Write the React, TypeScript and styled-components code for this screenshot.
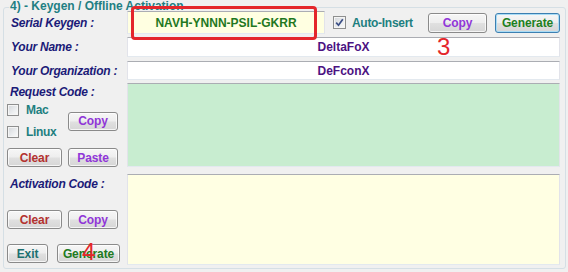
import React from "react";
import styled, { createGlobalStyle, css } from "styled-components";

const Global = createGlobalStyle`
  html, body { margin: 0; padding: 0; background: #f0f0f0; }
  body {
    width: 568px; height: 272px; overflow: hidden;
    font-family: "Liberation Sans", Arial, sans-serif;
  }
`;

const Window = styled.div`
  position: relative;
  width: 568px;
  height: 272px;
  box-sizing: border-box;
  padding: 7px 2px 3px 3px;
  background: #f0f0f0;
`;

const Frame = styled.div`
  height: 100%;
  box-sizing: border-box;
  border: 1px solid #d5dfe5;
  border-radius: 3px;
  padding: 0 5px 0 3px;
`;

const Title = styled.div`
  display: table;
  margin: -8px 0 -1px 2px;
  padding: 0 1px;
  height: 12px;
  line-height: 12px;
  background: #f0f0f0;
  color: #1f7f83;
  font-weight: bold;
  font-size: 12px;
  white-space: nowrap;
`;

const Row = styled.div<{ $h: number; $mt: number }>`
  display: grid;
  grid-template-columns: 120px 433px;
  height: ${(p) => p.$h}px;
  margin-top: ${(p) => p.$mt}px;
`;

const labelText = css`
  color: #1b1b78;
  font-weight: bold;
  font-style: italic;
  font-size: 12px;
  letter-spacing: -0.25px;
  white-space: nowrap;
`;

const Label = styled.div`
  ${labelText};
  align-self: center;
  padding-left: 4px;
  line-height: 14px;
`;

const PanelLabel = styled.div<{ $mt: number }>`
  ${labelText};
  margin-top: ${(p) => p.$mt}px;
  padding-left: 3px;
  line-height: 14px;
`;

const TextBox = styled.div<{ $bg: string; $color?: string; $w?: number }>`
  box-sizing: border-box;
  height: 100%;
  width: ${(p) => (p.$w ? `${p.$w}px` : "100%")};
  flex: none;
  border: 1px solid;
  border-color: #abadb3 #e2e3ea #e3e9ef #e2e3ea;
  background: ${(p) => p.$bg};
  color: ${(p) => p.$color || "#000"};
  display: flex;
  align-items: center;
  justify-content: center;
  font-weight: bold;
  font-size: 12px;
  white-space: nowrap;
`;

const TopControls = styled.div`
  display: flex;
  align-items: center;
  height: 100%;
`;

const Btn = styled.button<{ $color: string; $w: number; $h?: number; $focus?: boolean; $ml?: string }>`
  box-sizing: border-box;
  width: ${(p) => p.$w}px;
  height: ${(p) => p.$h || 19}px;
  margin: 0;
  margin-left: ${(p) => p.$ml || "0"};
  padding: 0;
  flex: none;
  border: 1px solid ${(p) => (p.$focus ? "#3c7fb1" : "#8a8a8a")};
  border-radius: 3px;
  background: linear-gradient(#f6f6f6 0%, #eeeeee 48%, #e0e0e0 52%, #d6d6d6 100%);
  box-shadow: inset 0 0 0 1px ${(p) => (p.$focus ? "#a9dcf6" : "rgba(255,255,255,0.75)")};
  color: ${(p) => p.$color};
  font-family: "Liberation Sans", Arial, sans-serif;
  font-weight: bold;
  font-size: 12px;
  letter-spacing: -0.1px;
  line-height: 1;
  cursor: default;
`;

const CheckWrap = styled.label<{ $ml?: number }>`
  display: flex;
  align-items: center;
  margin-left: ${(p) => p.$ml || 0}px;
  color: #1e7f80;
  font-weight: bold;
  font-size: 12px;
  letter-spacing: -0.3px;
  white-space: nowrap;
`;

const Box = styled.span<{ $size: number }>`
  box-sizing: border-box;
  width: ${(p) => p.$size}px;
  height: ${(p) => p.$size}px;
  flex: none;
  border: 1px solid #8e8f8f;
  background: linear-gradient(135deg, #d3d6da 0%, #eceef0 60%, #fafafa 100%);
  box-shadow: inset 0 0 0 1px #f5f5f5;
  display: flex;
  align-items: center;
  justify-content: center;
`;

const CheckText = styled.span<{ $gap: number }>`
  margin-left: ${(p) => p.$gap}px;
`;

function CheckBox({ label, checked, size, gap, ml }: { label: string; checked?: boolean; size: number; gap: number; ml?: number }) {
  return (
    <CheckWrap $ml={ml}>
      <Box $size={size}>
        {checked && (
          <svg width="9" height="9" viewBox="0 0 9 9">
            <path d="M1.2 4.6 L3.5 7.2 L7.8 1.3" fill="none" stroke="#3b4f86" strokeWidth="1.7" />
          </svg>
        )}
      </Box>
      <CheckText $gap={gap}>{label}</CheckText>
    </CheckWrap>
  );
}

const Panel = styled.div`
  display: flex;
  flex-direction: column;
`;

const CheckArea = styled.div`
  display: grid;
  grid-template-columns: 61px 50px;
  align-items: center;
  height: 44px;
`;

const CheckList = styled.div`
  display: grid;
  grid-template-rows: 22px 22px;
  align-items: center;
`;

const ButtonRow = styled.div<{ $mt: number; $gap: number }>`
  display: flex;
  gap: ${(p) => p.$gap}px;
  margin-top: ${(p) => p.$mt}px;
`;

const Annotation = styled.div`
  position: absolute;
  left: 131px;
  top: 6px;
  width: 186px;
  height: 34px;
  box-sizing: border-box;
  border: 3px solid #e4262b;
  border-radius: 4px;
  pointer-events: none;
`;

const Marker = styled.div<{ $x: number; $y: number }>`
  position: absolute;
  left: ${(p) => p.$x}px;
  top: ${(p) => p.$y}px;
  color: #e4262b;
  font-size: 24px;
  line-height: 24px;
  font-family: "Liberation Sans", Arial, sans-serif;
  pointer-events: none;
`;

const C = {
  copy: "#9036d8",
  clear: "#b3312f",
  exit: "#1c7070",
  gen: "#217a21",
};

export default function App() {
  return (
    <>
      <Global />
      <Window>
        <Frame>
          <Title>4) - Keygen / Offline Activation</Title>
          <Row $h={23} $mt={0}>
            <Label>Serial Keygen :</Label>
            <TopControls>
              <TextBox $bg="#ffffe1" $color="#1f781f" $w={198}>NAVH-YNNN-PSIL-GKRR</TextBox>
              <CheckBox label="Auto-Insert" checked size={13} gap={6} ml={8} />
              <Btn $color={C.copy} $w={59} $h={20} $ml="auto">Copy</Btn>
              <Btn $color="#1e801e" $w={65} $h={20} $ml="8px" $focus>Generate</Btn>
            </TopControls>
          </Row>
          <Row $h={20} $mt={3}>
            <Label>Your Name :</Label>
            <TextBox $bg="#ffffff" $color="#4b1282">DeltaFoX</TextBox>
          </Row>
          <Row $h={19} $mt={4}>
            <Label>Your Organization :</Label>
            <TextBox $bg="#ffffff" $color="#4b1282">DeFconX</TextBox>
          </Row>
          <Row $h={83} $mt={3}>
            <Panel>
              <PanelLabel $mt={2}>Request Code :</PanelLabel>
              <CheckArea>
                <CheckList>
                  <CheckBox label="Mac" size={12} gap={7} />
                  <CheckBox label="Linux" size={12} gap={7} />
                </CheckList>
                <Btn $color={C.copy} $w={50}>Copy</Btn>
              </CheckArea>
              <ButtonRow $mt={5} $gap={6}>
                <Btn $color={C.clear} $w={55}>Clear</Btn>
                <Btn $color={C.copy} $w={50}>Paste</Btn>
              </ButtonRow>
            </Panel>
            <TextBox $bg="#c8edd0" />
          </Row>
          <Row $h={91} $mt={8}>
            <Panel>
              <PanelLabel $mt={3}>Activation Code :</PanelLabel>
              <ButtonRow $mt={19} $gap={6}>
                <Btn $color={C.clear} $w={55}>Clear</Btn>
                <Btn $color={C.copy} $w={50}>Copy</Btn>
              </ButtonRow>
              <ButtonRow $mt={15} $gap={9}>
                <Btn $color={C.exit} $w={41}>Exit</Btn>
                <Btn $color={C.gen} $w={63}>Generate</Btn>
              </ButtonRow>
            </Panel>
            <TextBox $bg="#ffffe3" />
          </Row>
        </Frame>
        <Annotation />
        <Marker $x={437} $y={35}>3</Marker>
        <Marker $x={82} $y={240}>4</Marker>
      </Window>
    </>
  );
}
